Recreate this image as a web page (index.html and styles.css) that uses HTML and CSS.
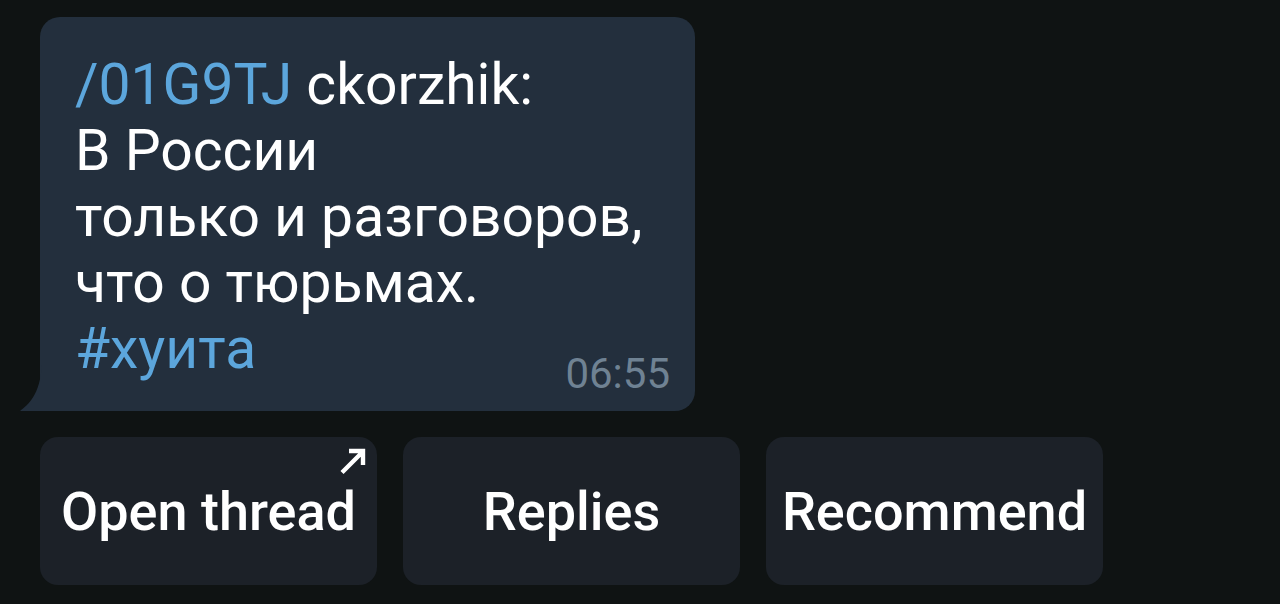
FILE: index.html
```html
<!DOCTYPE html>
<html lang="ru">
<head>
<meta charset="utf-8">
<link rel="stylesheet" href="styles.css">
</head>
<body>
<div class="chat">
  <div class="bubble">
    <svg class="tail" width="22" height="46" viewBox="0 0 22 46"><path d="M22 0 L22 46 L0 46 C8 40 20 30 22 0 Z" fill="#232f3d"/></svg>
    <div class="msg">
      <div class="line"><span class="link">/01G9TJ</span> ckorzhik:</div>
      <div class="line">В России</div>
      <div class="line">только и разговоров,</div>
      <div class="line">что о тюрьмах.</div>
      <div class="line last"><span class="link">#хуита</span><span class="time">06:55</span></div>
    </div>
  </div>
  <div class="buttons">
    <div class="btn">Open thread
      <svg class="arrow" width="28" height="28" viewBox="0 0 28 28"><path d="M3 25.5 L23.5 5 M10 4 H24 V18" fill="none" stroke="#fff" stroke-width="4.4" stroke-linecap="butt" stroke-linejoin="miter"/></svg>
    </div>
    <div class="btn">Replies</div>
    <div class="btn">Recommend</div>
  </div>
</div>
</body>
</html>
```
FILE: styles.css
```css
html, body {
  margin: 0;
  padding: 0;
  background: #0f1313;
  height: 100%;
}
body {
  font-family: Roboto, "Noto Sans", sans-serif;
  color: #ffffff;
}
.chat {
  padding: 17px 0 0 40px;
  display: flex;
  flex-direction: column;
  gap: 26px;
}
.bubble {
  position: relative;
  width: 655px;
  height: 394px;
  box-sizing: border-box;
  background: #232f3d;
  border-radius: 20px 20px 20px 0;
  padding: 35px 25px 0 35px;
}
.tail {
  position: absolute;
  left: -20px;
  bottom: 0;
}
.msg {
  font-size: 57px;
  line-height: 66px;
}
.line {
  white-space: nowrap;
}
.link {
  color: #5ca6dc;
}
.last {
  display: flex;
  justify-content: space-between;
  align-items: baseline;
}
.time {
  font-size: 42px;
  color: #6f8293;
  position: relative;
  top: 20px;
}
.buttons {
  display: flex;
  gap: 26px;
}
.btn {
  position: relative;
  width: 337px;
  height: 148px;
  background: #1c2128;
  border-radius: 18px;
  display: flex;
  align-items: center;
  justify-content: center;
  font-size: 54px;
  font-weight: 500;
  color: #fff;
}
.arrow {
  position: absolute;
  right: 10px;
  top: 10px;
}
```
